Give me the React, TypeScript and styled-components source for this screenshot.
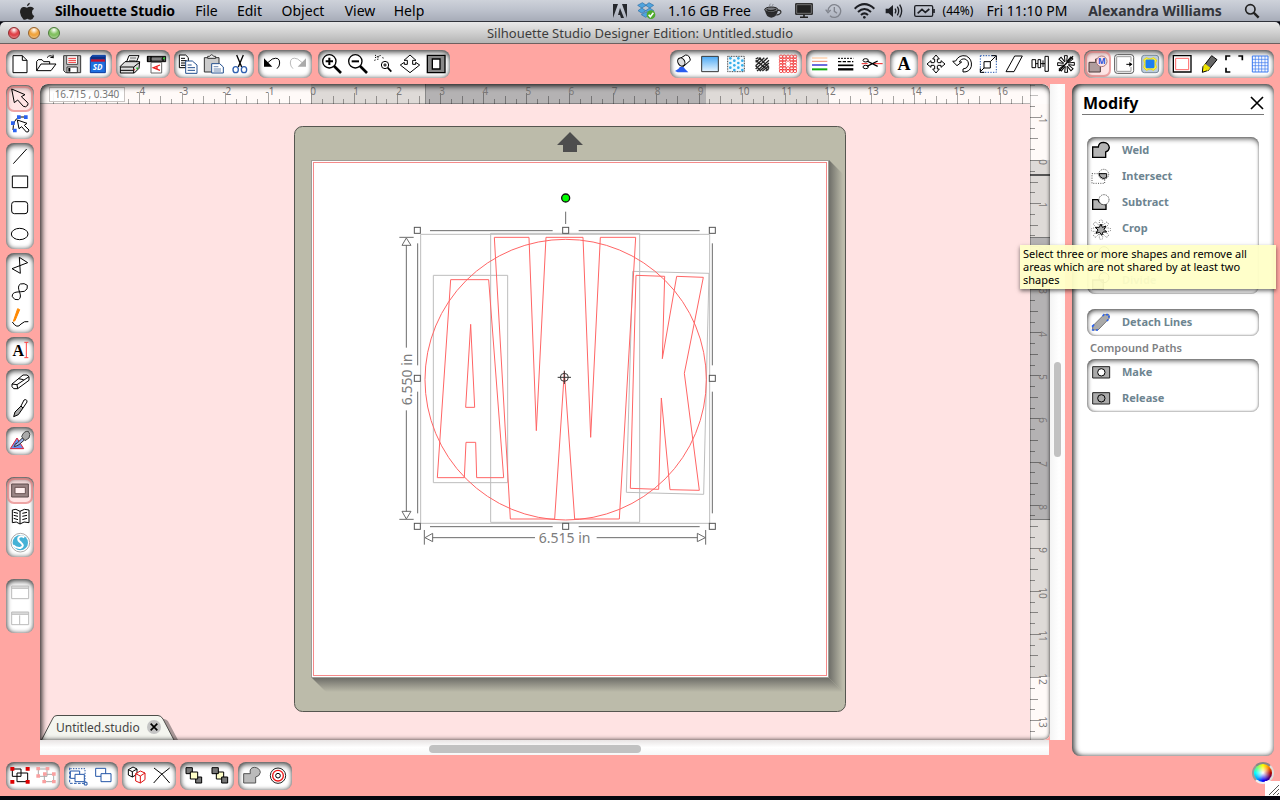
import React from "react";
import styled, { createGlobalStyle, css } from "styled-components";

const GlobalStyle = createGlobalStyle`
  *, *::before, *::after { box-sizing: border-box; }
  body {
    margin: 0;
    background: #05060f;
    font-family: "Noto Sans", "Open Sans", sans-serif;
    color: #000;
  }
  button {
    font: inherit;
    color: inherit;
    border: 0;
    padding: 0;
    margin: 0;
    background: none;
    cursor: pointer;
  }
`;

const serif = '"Liberation Serif", serif';
const pink = "#ffa6a2";

/* ---------- layout ---------- */

const Screen = styled.div`
  display: flex;
  flex-direction: column;
  min-height: 100vh;
  padding-bottom: 4px;
  background: #05060f;
`;

const MenuBar = styled.nav`
  display: flex;
  align-items: center;
  height: 22px;
  padding: 0 8px;
  background: linear-gradient(#ced2da, #bcc1cc 50%, #a7acb8);
  border-bottom: 1px solid #30323a;
`;

const MenuItem = styled.button<{ $w: number; $bold?: boolean; $small?: boolean; $dim?: boolean }>`
  display: flex;
  align-items: center;
  justify-content: center;
  flex: none;
  width: ${(p) => p.$w}px;
  height: 21px;
  white-space: nowrap;
  font-size: ${(p) => (p.$small ? 12 : 14)}px;
  font-weight: ${(p) => (p.$bold ? 700 : 400)};
  color: ${(p) => (p.$dim ? "#34363c" : "#000")};
`;

const Spacer = styled.div`
  flex: 1;
`;

const TitleBar = styled.header`
  display: flex;
  align-items: center;
  height: 22px;
  padding: 0 8px;
  border-radius: 5px 5px 0 0;
  border-bottom: 1px solid #6d6060;
  background: linear-gradient(#e9e9e9, #d0d0d0 50%, #b4b4b4);
`;

const WindowButtons = styled.div`
  display: flex;
  gap: 8px;
  width: 60px;
`;

const WindowButton = styled.button<{ $color: string; $edge: string }>`
  width: 12px;
  height: 12px;
  border: 1px solid ${(p) => p.$edge};
  border-radius: 50%;
  background: radial-gradient(circle at 50% 20%, #fff 0, ${(p) => p.$color} 45%, ${(p) => p.$color} 60%, #fff8 120%);
`;

const WindowTitle = styled.h1`
  flex: 1;
  margin: 0 60px 0 0;
  text-align: center;
  font-size: 13px;
  line-height: 20px;
  font-weight: 400;
  color: #3c3c3c;
`;

const Body = styled.div`
  position: relative;
  flex: 1;
  display: flex;
  flex-direction: column;
  background: ${pink};
`;

const Toolbar = styled.div`
  display: flex;
  gap: 4px;
  padding: 6px;
`;

const Main = styled.div`
  flex: 1;
  display: flex;
  min-height: 0;
  padding: 0 6px;
`;

const SideTools = styled.div`
  display: flex;
  flex-direction: column;
  gap: 4px;
  width: 28px;
  margin-right: 6px;
  padding-top: 1px;
`;

const inset = css`
  box-shadow:
    inset 0 4px 5px -1px rgba(0, 0, 0, 0.55),
    inset 3px 0 4px -1px rgba(0, 0, 0, 0.3),
    inset -2px 0 4px -1px rgba(0, 0, 0, 0.25),
    inset 0 -2px 4px -1px rgba(0, 0, 0, 0.25);
`;

const ToolGroup = styled.div<{ $column?: boolean; $gapBefore?: number }>`
  display: flex;
  flex: none;
  flex-direction: ${(p) => (p.$column ? "column" : "row")};
  ${(p) => p.$gapBefore && `margin-${p.$column ? "top" : "left"}: ${p.$gapBefore}px;`}
  padding: 1px;
  border-radius: 8px;
  background: #fff;
  ${inset}
`;

const ToolButton = styled.button<{ $active?: boolean }>`
  display: block;
  width: 26px;
  height: 26px;
  border-radius: 7px;
  ${(p) =>
    p.$active &&
    `background: rgba(255, 170, 170, 0.3); box-shadow: inset 0 0 0 2px rgba(225, 120, 120, 0.6);`}
`;

const Glyph = styled.svg`
  display: block;
  width: 100%;
  height: 100%;
  fill: none;
  stroke: #000;
  stroke-width: 3;
`;

const Workspace = styled.section`
  flex: 1;
  display: grid;
  grid-template: minmax(0, 1fr) 15px / minmax(0, 1fr) 15px;
  margin-right: 7px;
  margin-bottom: 1px;
`;

const Canvas = styled.div`
  position: relative;
  display: grid;
  grid-template: 20px minmax(0, 1fr) / minmax(0, 1fr) 20px;
  border-radius: 8px 8px 7px 0;
  overflow: hidden;
  background: #ffe3e3;
  &::after {
    content: "";
    position: absolute;
    inset: 0;
    border-radius: inherit;
    pointer-events: none;
    box-shadow:
      inset 0 4px 5px -1px rgba(0, 0, 0, 0.6),
      inset 4px 0 5px -1px rgba(0, 0, 0, 0.55),
      inset 0 -2px 4px -1px rgba(0, 0, 0, 0.3),
      inset -1px 0 3px -1px rgba(0, 0, 0, 0.3);
  }
`;

const Fill = styled.svg<{ $rows?: boolean }>`
  display: block;
  width: 100%;
  height: 100%;
  min-height: 0;
  ${(p) => p.$rows && "grid-row: 1 / 3; grid-column: 2;"}
`;

const Position = styled.output`
  position: absolute;
  left: 9px;
  top: 3px;
  width: 76px;
  height: 15px;
  border: 1px solid #c9c4c2;
  background: rgba(255, 255, 255, 0.9);
  text-align: center;
  font-size: 10px;
  line-height: 13px;
  color: #777;
`;

const Tab = styled.div`
  position: absolute;
  left: 1px;
  bottom: 0;
  display: flex;
  align-items: center;
  width: 138px;
  height: 25px;
  padding-left: 15px;
`;

const TabShape = styled.svg`
  position: absolute;
  inset: 0;
  width: 138px;
  height: 25px;
`;

const TabLabel = styled.button`
  position: relative;
  width: 86px;
  padding-top: 1px;
  text-align: left;
  font-size: 12px;
  line-height: 24px;
  color: #444;
`;

const TabClose = styled.button`
  position: relative;
  display: block;
  width: 14px;
  height: 14px;
  margin: 0 0 2px 5px;
  border-radius: 50%;
  background: #c4c4c4;
`;

const ScrollTrack = styled.div<{ $vertical?: boolean }>`
  display: flex;
  ${(p) =>
    p.$vertical
      ? "padding: 278px 4px 0 4px; background: linear-gradient(90deg, #f4f4f4, #fff 60%, #fafafa);"
      : "padding: 5px 0 2px 389px; background: linear-gradient(#e8e4e4, #fff 50%, #f6f6f6); margin-right: 1px;"}
`;

const ScrollThumb = styled.div<{ $vertical?: boolean }>`
  ${(p) => (p.$vertical ? "width: 8px; height: 95px;" : "width: 212px; height: 8px;")}
  border-radius: 4px;
  background: #c1c1c1;
`;

const Panel = styled.aside`
  position: relative;
  flex: none;
  width: 202px;
  padding: 0 10px;
  border-radius: 8px;
  background: #fff;
  box-shadow:
    inset 0 4px 5px -1px rgba(0, 0, 0, 0.55),
    inset 4px 0 5px -1px rgba(0, 0, 0, 0.55),
    inset 0 -2px 4px -1px rgba(0, 0, 0, 0.25),
    inset -2px 0 4px -1px rgba(0, 0, 0, 0.2);
`;

const PanelHeader = styled.div`
  display: flex;
  align-items: center;
  justify-content: space-between;
  height: 31px;
  padding-top: 8px;
  border-bottom: 1px solid #777;
  margin-bottom: 22px;
`;

const PanelTitle = styled.h2`
  margin: 0;
  padding-left: 1px;
  font-size: 16px;
  line-height: 22px;
`;

const CloseButton = styled.button`
  width: 14px;
  height: 14px;
`;

const ActionList = styled.div`
  margin: 0 5px;
  padding-top: 1px;
  border-radius: 8px;
  background: #fff;
  box-shadow:
    inset 0 4px 5px -2px rgba(0, 0, 0, 0.6),
    inset 3px 0 4px -2px rgba(0, 0, 0, 0.4),
    inset -1px 0 2px 0 rgba(0, 0, 0, 0.15),
    inset 0 -1px 2px 0 rgba(0, 0, 0, 0.2);
  & + & { margin-top: 15px; }
`;

const Action = styled.button`
  display: flex;
  align-items: center;
  gap: 8px;
  width: 100%;
  height: 26px;
  padding-left: 1px;
  font-size: 11px;
  line-height: 24px;
  font-weight: 700;
  color: #6d8490;
  text-align: left;
`;

const ActionLabel = styled.span`
  align-self: flex-start;
`;

const ActionGlyph = styled(Glyph)`
  width: 26px;
  height: 26px;
  flex: none;
`;

const SubHeading = styled.h3`
  margin: 0 8px;
  font-size: 11px;
  line-height: 23px;
  font-weight: 600;
  color: #7e8083;
`;

const Tooltip = styled.div`
  position: absolute;
  left: -52px;
  top: 161px;
  width: 256px;
  padding: 2px 3px 3px;
  background: rgba(255, 255, 199, 0.95);
  box-shadow: 0 2px 4px rgba(0, 0, 0, 0.55);
  font-size: 11px;
  line-height: 13px;
  color: #000;
`;

const BottomBar = styled.footer`
  display: flex;
  gap: 4px;
  padding: 6px 6px 6px;
  height: 40px;
  align-items: flex-start;
`;

const ColorWheel = styled.button`
  width: 22px;
  height: 22px;
  border: 2px solid #bbb;
  border-color: #888 #ddd #eee #999;
  border-radius: 50%;
  background:
    radial-gradient(circle, #fff 0, rgba(255, 255, 255, 0) 60%),
    conic-gradient(#ff0, #f80, #a00 25%, #408, #00f 50%, #0af, #0ff 75%, #7f7, #ff0);
`;

const Grip = styled.svg`
  position: absolute;
  right: 0;
  bottom: 0;
  width: 15px;
  height: 15px;
  background: #fff;
`;

/* ---------- icons, drawn on a 78 × 78 grid ---------- */

const G = ({ children, view = "0 0 78 78" }: { children: React.ReactNode; view?: string }) => (
  <Glyph viewBox={view} aria-hidden="true">{children}</Glyph>
);

const magnifier = (
  <>
    <circle cx="31" cy="31" r="20" strokeWidth="4" fill="#fff" />
    <path d="M45 45L66 66" strokeWidth="8" />
  </>
);
const pointer = "M14 9L22 50L32 42L49 61Q56 65 62 58Q65 52 60 48L43 32L54 26Z";
const rings = (x: number, y: number) => <circle key={`${x}-${y}`} cx={x} cy={y} r="5" />;
const around = (n: number, draw: React.ReactNode) =>
  Array.from({ length: n }, (_, i) => (
    <g key={i} transform={`rotate(${(360 / n) * i} 39 39)`}>{draw}</g>
  ));

const icons: Record<string, React.ReactNode> = {
  New: <path d="M18 14H46L60 28V65H18ZM46 14V28H60" fill="#fff" />,
  Open: (
    <>
      <path d="M11 59V31L16 26H27L32 32H50V39M11 59L24 39H69L54 59Z" fill="#fff" />
      <path d="M42 20Q52 8 61 20M61 20L60 11M61 20L52 19" />
    </>
  ),
  Save: (
    <>
      <path d="M14 14H65V65H20L14 59Z" fill="#bbb" stroke="#333" />
      <path d="M23 14H56V40H23Z" fill="#fff" stroke="#444" />
      <path d="M28 22H51M28 28H51M28 34H51" stroke="#e33" />
      <path d="M24 48H55V65H24Z" fill="#fff" stroke="#333" />
      <path d="M31 51V62" strokeWidth="6" />
    </>
  ),
  "Save to SD card": (
    <>
      <path d="M16 20L22 13H61V65H16Z" fill="#1e6fe0" stroke="#0a3a9c" />
      <path d="M18 16H60V26H18Z" fill="#0c2f86" stroke="none" />
      <path d="M18 25H60V32H18Z" fill="#c8102e" stroke="none" />
      <text x="38" y="56" fontSize="24" fontWeight="700" textAnchor="middle" fill="#fff" stroke="none" fontStyle="italic">SD</text>
    </>
  ),
  Print: (
    <>
      <path d="M28 34L36 14H66L56 38" fill="#fff" />
      <path d="M39 21H58M36 28H56" strokeWidth="2" />
      <path d="M10 46L24 32H68L66 52L52 66H10Z" fill="#ddd" />
      <path d="M10 48H50L68 34M50 48V66M10 58H50" strokeWidth="3" />
      <path d="M58 52h5" stroke="#2b2" strokeWidth="5" />
      <path d="M50 56h4" stroke="#d33" strokeWidth="4" />
    </>
  ),
  "Send to Silhouette": (
    <>
      <path d="M13 16H68V32H13Z" fill="#555" />
      <path d="M14 16V32M24 16V32M60 18V30" strokeWidth="4" />
      <path d="M26 24H54" stroke="#999" strokeWidth="4" />
      <path d="M60 22h6" stroke="#3c3" strokeWidth="5" />
      <path d="M24 34H56V66H24Z" fill="#fff" stroke="#666" />
      <path d="M51 42L31 50L51 58M42 46V54" stroke="#e22" strokeWidth="4" />
    </>
  ),
  Copy: (
    <>
      <path d="M13 12H32L40 20V50H13Z" fill="#fff" />
      <path d="M18 22H30M18 29H35M18 36H35M18 43H35" />
      <path d="M32 30H52L66 42V67H32Z" fill="#fff" stroke="#24508f" />
      <path d="M38 42H50M38 50H60M38 58H60" stroke="#24508f" />
    </>
  ),
  Paste: (
    <>
      <path d="M10 20H54V63H10Z" fill="#ccc" stroke="#333" />
      <path d="M20 22V16H26Q32 6 38 16H44V22Z" fill="#eee" stroke="#333" />
      <path d="M32 38H56L67 48V66H32Z" fill="#fff" stroke="#24508f" />
      <path d="M38 47H52M38 54H60M38 60H60" stroke="#24508f" strokeWidth="2" />
    </>
  ),
  Cut: (
    <>
      <path d="M29 12L44 48M49 12L34 48" strokeWidth="4" />
      <ellipse cx="26" cy="56" rx="8" ry="9" stroke="#3060b0" strokeWidth="4" />
      <ellipse cx="51" cy="56" rx="8" ry="9" stroke="#3060b0" strokeWidth="4" />
    </>
  ),
  Undo: (
    <>
      <path d="M20 40L40 24Q62 16 62 36Q62 46 54 53" />
      <path d="M15 22V47H40Z" fill="#000" stroke="none" />
    </>
  ),
  Redo: (
    <>
      <path d="M58 40L38 24Q16 16 16 36Q16 46 24 53" stroke="#bbb" />
      <path d="M63 22V47H38Z" fill="#aaa" stroke="none" />
    </>
  ),
  "Zoom In": <>{magnifier}<path d="M20 31H42M31 20V42" strokeWidth="6" /></>,
  "Zoom Out": <>{magnifier}<path d="M20 31H42" strokeWidth="6" /></>,
  "Zoom Selection": (
    <>
      <path d="M12 20L22 16M22 16L20 28M12 12L16 15M28 12L26 16M10 28L16 26M34 20L40 22" strokeDasharray="4 3" />
      <circle cx="42" cy="42" r="11" />
      <path d="M37 42H47M42 37V47" />
      <path d="M50 50L61 62" strokeWidth="5" />
    </>
  ),
  "Drag Zoom": <path d="M39 12L57 28H47V40H56V34L68 42L39 65L10 42L22 34V40H31V28H21Z" fill="#fff" strokeLinejoin="round" />,
  "Fit to Page": (
    <>
      <path d="M13 13H66V65H13Z" fill="#888" strokeWidth="4" />
      <path d="M28 24H51V54H28Z" fill="#fff" strokeWidth="4" />
    </>
  ),
  "Fill Color": (
    <>
      <path d="M12 60Q26 52 26 48Q40 46 42 54L52 64H20Z" fill="#2a5df0" stroke="none" />
      <path d="M21 26L44 12Q56 12 58 28L38 46Q22 44 21 26Z" fill="#fff" />
      <ellipse cx="31" cy="33" rx="10" ry="13" fill="#ddd" transform="rotate(-30 31 33)" />
    </>
  ),
  "Fill Gradient": (
    <>
      <defs>
        <linearGradient id="sky" x1="0" y1="0" x2="0" y2="1">
          <stop offset="0" stopColor="#4aa8f4" /><stop offset="1" stopColor="#e8f5ff" />
        </linearGradient>
      </defs>
      <path d="M14 16H64V62H14Z" fill="url(#sky)" stroke="#333" />
    </>
  ),
  "Fill Pattern": (
    <>
      <path d="M14 16H64V62H14Z" fill="#eef9ff" stroke="#444" strokeDasharray="3 2" />
      <g fill="#35aeea" stroke="none">
        {[22, 34, 46, 58].flatMap((x, i) =>
          [22, 36, 50].map((y) => <circle key={`${x}-${y}`} cx={x} cy={y + (i % 2) * 7} r="4" />)
        )}
      </g>
    </>
  ),
  Sketch: (
    <path
      d="M20 24L28 20M20 34L36 20M20 44L46 20M20 54L56 20M24 60L60 28M32 60L60 36M40 60L60 44M50 60L60 52M20 28L58 58M30 20L60 50M20 44L36 60"
      stroke="#222"
      strokeWidth="4"
    />
  ),
  Rhinestones: (
    <g stroke="#e11" strokeWidth="2">
      {[18, 28, 39, 50, 60].flatMap((x) => [17, 26, 52, 60].map((y) => rings(x, y)))}
      {[34, 43].flatMap((y) => [18, 28, 50, 60].map((x) => rings(x, y)))}
    </g>
  ),
  "Line Color": (
    <>
      <path d="M15 21H61" stroke="#ffbe8a" />
      <path d="M15 31H61" stroke="#e86" />
      <path d="M15 42H61" stroke="#22c" strokeWidth="4" />
      <path d="M15 55H61" stroke="#1a1" strokeWidth="6" />
    </>
  ),
  "Line Style": (
    <>
      <path d="M15 22H61" strokeDasharray="6 3" />
      <path d="M15 32H61" strokeWidth="4" strokeDasharray="10 4" />
      <path d="M15 43H61" strokeWidth="5" />
      <path d="M15 55H61" strokeWidth="7" />
    </>
  ),
  "Cut Style": (
    <>
      <path d="M8 38H26M44 38H71" stroke="#e22" />
      <path d="M24 30L56 46M24 46L56 30" strokeWidth="4" />
      <ellipse cx="20" cy="28" rx="8" ry="5" />
      <ellipse cx="20" cy="48" rx="8" ry="5" />
    </>
  ),
  "Text Style": (
    <text x="39" y="57" fontSize="54" fontWeight="700" textAnchor="middle" fill="#000" stroke="none" fontFamily={serif}>A</text>
  ),
  Move: <>{around(4, <path d="M35 34V24H29L39 12L49 24H43V34" fill="#fff" />)}</>,
  Rotate: <path d="M11 31L24 44L38 33H31Q36 22 48 24Q60 29 58 42Q54 54 42 54L42 63Q62 64 67 46Q70 24 52 15Q30 10 20 30Z" fill="#fff" strokeLinejoin="round" />,
  Scale: (
    <>
      <path d="M16 14H64V64H16Z" stroke="#2456b0" strokeDasharray="4 4" />
      <path d="M27 32H46V51H27Z" fill="#fff" />
      <path d="M46 32L62 16M50 14H64V28M27 51L16 62M16 52V64H28" />
    </>
  ),
  Shear: <path d="M41 15H64L39 62H15Z" fill="#fff" />,
  Align: (
    <>
      <path d="M24 38H54" />
      <path d="M15 26H26V50H15ZM33 26H41V50H33ZM54 16H64V61H54Z" fill="#fff" />
      <path d="M48 28V48" />
    </>
  ),
  Replicate: <>{around(8, <path d="M36 32L34 14H43L41 32" fill="#fff" />)}<path d="M18 60L60 16" strokeWidth="4" /></>,
  Modify: (
    <>
      <path d="M12 34H32V24H46V63H12Z" fill="#b09d9d" stroke="#4b3b3b" />
      <circle cx="50" cy="31" r="16" fill="#fbe4e8" stroke="#a77" />
      <text x="50" y="40" fontSize="24" textAnchor="middle" fill="#2a50d8" stroke="none" fontWeight="700">M</text>
    </>
  ),
  Offset: (
    <>
      <rect x="11" y="11" width="57" height="56" rx="8" fill="#fff" stroke="#555" />
      <path d="M60 32V17H17V61H60V48" stroke="#999" />
      <path d="M46 40H62" />
      <path d="M55 33L64 40L55 47Z" fill="#000" stroke="none" />
    </>
  ),
  Trace: (
    <>
      <rect x="14" y="13" width="51" height="52" rx="8" fill="#bcd" stroke="#789" />
      <path d="M20 26L28 20L39 24L50 20L59 27L55 38L59 50L50 58L39 54L28 58L20 50L23 38Z" fill="#fff23a" stroke="#e6d820" />
      <path d="M28 28L50 28L50 49L28 49Z" fill="#1c7ff0" stroke="#1c7ff0" strokeWidth="5" strokeLinejoin="bevel" />
    </>
  ),
  "Page Settings": (
    <>
      <path d="M13 14H66V63H13Z" fill="#fff" strokeWidth="4" />
      <path d="M20 22H59V56H20Z" stroke="#f66" strokeWidth="3" />
    </>
  ),
  Pencil: (
    <>
      <path d="M24 48L50 14L66 26L40 58Z" fill="#666" />
      <path d="M24 46L40 58L22 64Z" fill="#fff200" />
      <path d="M30 38L46 50L38 60L24 48Z" fill="#ece300" stroke="none" />
    </>
  ),
  "Full Screen": <path d="M15 28V15H28M52 15H64V28M15 50V63H28" strokeWidth="5" />,
  Grid: (
    <>
      <path d="M16 15H63V63H16Z" fill="#f4f8ff" stroke="#3a78ee" />
      <path d="M25 15V63M35 15V63M44 15V63M54 15V63M15 25H63M15 35H63M15 44H63M15 54H63" stroke="#3a78ee" strokeWidth="2" />
    </>
  ),
  Select: <path d={pointer} strokeLinejoin="round" />,
  "Edit Points": (
    <>
      <path d="M56 15H36Q18 24 18 54" />
      <path d="M30 10h11v11h-11zM51 10h11v11h-11zM12 28h11v11h-11zM18 50h11v11h-11z" fill="#2a62f0" stroke="none" />
      <path d="M31 24L36 50L44 44L58 60Q65 62 66 54L52 40L60 34Z" fill="#fff" />
    </>
  ),
  "Draw a Line": <path d="M19 59L59 15" />,
  "Draw a Rectangle": <path d="M16 18H62V53H16Z" fill="#fff" />,
  "Draw a Rounded Rectangle": <rect x="14" y="17" width="48" height="36" rx="8" fill="#fff" />,
  "Draw an Ellipse": <ellipse cx="38" cy="36" rx="25" ry="17" fill="#fff" />,
  "Draw a Polygon": <path d="M37 10L62 26L15 44L40 58Z" strokeLinejoin="round" />,
  "Draw a Curve Shape": <path d="M38 37Q30 18 40 12Q52 8 61 16Q64 28 52 34Q38 36 30 36Q14 38 16 50Q22 62 34 59Q44 54 38 37Z" />,
  "Draw Freehand": (
    <>
      <path d="M32 8L38 11L24 44L19 46Z" fill="#f80" stroke="#f80" />
      <path d="M16 48Q30 70 42 54Q52 44 64 47" />
    </>
  ),
  Text: (
    <>
      <text x="34" y="55" fontSize="48" fontWeight="700" textAnchor="middle" fill="#000" stroke="none" fontFamily={serif}>A</text>
      <path d="M52 13H64M58 13V59M52 59H64" stroke="#f44" />
    </>
  ),
  Eraser: (
    <>
      <path d="M15 42L48 15H60L66 20V31L32 56H20L15 50Z" fill="#fff" strokeLinejoin="round" />
      <path d="M15 42L30 44L32 56M30 44L66 20M34 26L50 29" />
    </>
  ),
  Knife: (
    <>
      <path d="M42 30L51 12Q60 8 60 18L48 36Z" fill="#fff" />
      <path d="M42 30L48 36L34 56L20 62L24 48Z" fill="#aaa" />
    </>
  ),
  Eyedropper: (
    <>
      <path d="M10 62L30 30L50 62Z" fill="#6b90f0" stroke="#d23" />
      <path d="M22 56Q24 44 30 46L46 30L52 36L36 50Q30 54 22 56Z" fill="#9db4f0" stroke="#333" />
      <path d="M44 26Q50 8 64 10Q72 18 66 30L54 38Z" fill="#aaa" stroke="#444" />
    </>
  ),
  "Drawing View": (
    <>
      <path d="M14 18H64V57H14Z" fill="#9a8484" stroke="#5a4848" />
      <path d="M24 28H55V47H24Z" fill="#ffeeee" stroke="#6a5252" />
    </>
  ),
  "Library View": (
    <>
      <path d="M39 22Q26 12 16 18V56Q28 50 39 60Q50 50 66 56V18Q52 12 39 22V60" fill="#fff" />
      <path d="M20 25L33 28M20 34L33 37M20 43L33 47M46 28L60 25M46 37L60 34M46 47L60 43" />
    </>
  ),
  "Online Store": (
    <>
      <circle cx="40" cy="38" r="28" fill="#fff" stroke="#aaa" />
      <circle cx="40" cy="38" r="23" fill="#45b2d6" stroke="none" />
      <path d="M52 22Q40 14 34 24Q32 32 42 38Q54 48 40 54Q30 56 18 46" stroke="#fff" strokeWidth="6" />
    </>
  ),
  "Single Window": (
    <>
      <path d="M14 18H65V56H14Z" fill="#fff" stroke="#bbb" />
      <path d="M14 21H65M14 25H65" stroke="#bbb" />
    </>
  ),
  "Split Window": (
    <>
      <path d="M14 18H65V56H14ZM38 28V56" fill="#fff" stroke="#bbb" />
      <path d="M14 21H65M14 25H65" stroke="#bbb" />
    </>
  ),
  Group: (
    <>
      <path d="M16 18H42V40H16ZM30 30H62V56H30Z" />
      <path d="M10 12h12v11H10zM56 12h12v11H56zM10 51h12v11H10zM56 51h12v11H56z" fill="#d00" stroke="none" />
    </>
  ),
  Ungroup: (
    <>
      <path d="M16 18H42V40H16ZM34 34H62V56H34Z" stroke="#aaa" />
      <path d="M10 12h11v10H10zM38 12h11v10H38zM10 34h11v10H10zM30 28h11v10H30zM57 28h11v10H57zM28 51h11v10H28zM57 51h11v10H57z" fill="#f9a0a0" stroke="none" />
    </>
  ),
  "Make Group": (
    <g stroke="#2456a8">
      <path d="M16 17H60V58" strokeDasharray="4 4" />
      <path d="M14 14V61H60" strokeDasharray="8 4" />
      <path d="M16 24H44V46H16Z" fill="#fff" />
      <path d="M30 34H58V56H30Z" fill="#fff" />
      <path d="M58 58h8v8h-8z" fill="#fff" />
    </g>
  ),
  "Release Group": (
    <g stroke="#2456a8">
      <path d="M14 16H44V40H14Z" fill="#fff" />
      <path d="M30 32H60V56H30Z" fill="#fff" />
    </g>
  ),
  "3D Object": (
    <>
      <path d="M16 20L30 12L42 18V34L28 42L16 36ZM16 20L28 26L42 18M28 26V42" fill="#fff" />
      <path d="M38 32L52 24L66 30V50L52 60L38 54ZM38 32L52 39L66 30M52 39V60" fill="#fff" stroke="#d11" />
    </>
  ),
  Delete: <path d="M15 15Q40 30 62 60M62 15Q32 35 14 60" />,
  "Bring Forward": (
    <>
      <path d="M15 14H34V32H15ZM44 42H62V60H44Z" fill="#777" />
      <path d="M28 27H50V48H28Z" fill="#ffffc8" />
    </>
  ),
  "Send Backward": (
    <>
      <path d="M28 27H50V48H28Z" fill="#ffffc8" />
      <path d="M15 14H34V32H15ZM44 42H62V60H44Z" fill="#777" />
    </>
  ),
  "Weld Shapes": <path d="M14 32H34Q30 14 46 13Q62 14 64 28Q62 40 50 42V60H14Z" fill="#bbb" stroke="#555" />,
  "Offset Path": (
    <>
      <circle cx="39" cy="38" r="23" stroke="#222" />
      <circle cx="39" cy="38" r="16" stroke="#e11" strokeWidth="4" />
      <circle cx="39" cy="38" r="7" />
    </>
  ),
  Weld: <path d="M14 25H31Q32 11 47 11Q62 12 64 27Q62 38 53 40V56H14Z" fill="#b4b4b4" strokeWidth="4" />,
  Intersect: (
    <>
      <path d="M12 27H50V56H12Z" strokeDasharray="3 4" stroke="#555" />
      <circle cx="47" cy="29" r="15" strokeDasharray="3 3" stroke="#555" />
      <path d="M33 27H56V38Q50 42 44 41Q34 38 33 27Z" fill="#aaa" />
    </>
  ),
  Subtract: (
    <>
      <path d="M14 27H30Q34 42 54 42V56H14Z" fill="#b4b4b4" strokeWidth="4" />
      <circle cx="48" cy="27" r="15" stroke="#555" strokeDasharray="3 2" fill="#fff" />
    </>
  ),
  Crop: (
    <>
      {around(8, <path d="M34 26V12Q39 8 44 12V26" strokeDasharray="3 4" strokeWidth="2" stroke="#333" />)}
      <path d="M39 22L43 32L54 28L48 38L56 46L45 46L41 56L35 47L24 50L30 40L22 32L34 32Z" fill="#aaa" />
    </>
  ),
  "Subtract All": (
    <>
      <path d="M14 27H50V58H14Z" fill="#b4b4b4" />
      <circle cx="48" cy="27" r="15" />
    </>
  ),
  Divide: (
    <>
      <path d="M14 34H46V60H14Z" fill="#b4b4b4" strokeWidth="4" />
      <circle cx="48" cy="27" r="15" />
    </>
  ),
  "Detach Lines": (
    <>
      <path d="M14 46L48 12H63V24L30 58H14Z" fill="#aaa" stroke="#777" />
      <path d="M14 44V58H30L34 54M14 46L22 38M44 16L48 12H63V24L56 32" stroke="#2a62f0" strokeWidth="5" strokeDasharray="6 6" />
    </>
  ),
  Make: (
    <>
      <path d="M14 18H65V52H14Z" fill="#aaa" stroke="#222" />
      <circle cx="40" cy="35" r="11" fill="#fff" />
    </>
  ),
  Release: (
    <>
      <path d="M14 18H65V52H14Z" fill="#aaa" stroke="#222" />
      <circle cx="40" cy="35" r="11" />
    </>
  ),
};

const Tools = ({ names, active, ...group }: { names: string[]; active?: string; $column?: boolean; $gapBefore?: number }) => (
  <ToolGroup role="group" {...group}>
    {names.map((name) => (
      <ToolButton key={name} aria-label={name} $active={name === active}>
        <G>{icons[name]}</G>
      </ToolButton>
    ))}
  </ToolGroup>
);

/* ---------- rulers ---------- */

const INCH = 43.08;
const ticks = (from: number, to: number) =>
  Array.from({ length: (to - from) * 4 + 1 }, (_, i) => from + i / 4);
const tickSize = (v: number) => (v % 1 === 0 ? 11 : v % 0.5 === 0 ? 8 : 5);

const TopRuler = () => (
  <Fill aria-label="Horizontal ruler">
    <rect width="100%" height="20" fill="#fffaf8" />
    <g transform="translate(271 0)">
      <rect width="517" height="20" fill="#dedad7" />
      <rect x="114" width="281" height="20" fill="#b4b2b3" />
      <path d="M114.5 0V20" stroke="#888" />
      {ticks(-6, 18).map((v) => (
        <path key={v} d={`M${Math.round(v * INCH) + 0.5} ${20 - tickSize(v)}V20`} stroke="#000" strokeOpacity="0.34" />
      ))}
      {ticks(-4, 16).filter((v) => v % 1 === 0).map((v) => (
        <text key={v} x={v * INCH + 2} y="11" fontSize="10" textAnchor="middle" fill="#7c7979">{v}</text>
      ))}
    </g>
    <path d="M0 19.5H2000" stroke="#000" strokeOpacity="0.28" />
  </Fill>
);

const SideRuler = () => (
  <Fill $rows aria-label="Vertical ruler">
    <rect width="20" height="100%" fill="#fffaf8" />
    <g transform="translate(0 76)">
      <rect width="20" height="517" fill="#dedad7" />
      <rect y="77" width="20" height="283" fill="#b4b2b3" />
      <path d="M0 77.5H20M0 359.5H20" stroke="#777" />
      <path d="M0 15H20" stroke="#555" strokeWidth="2" />
      {ticks(-2, 14).map((v) => (
        <path key={v} d={`M0 ${Math.round(v * INCH) + 0.5}H${tickSize(v)}`} stroke="#000" strokeOpacity="0.4" />
      ))}
      {ticks(-1, 13).filter((v) => v % 1 === 0).map((v) => (
        <text key={v} transform={`translate(9 ${Math.round(v * INCH) + 2}) rotate(90)`} fontSize="10" textAnchor="middle" fill="#7c7979">{v}</text>
      ))}
    </g>
    <rect width="20" height="20" fill="#fff" fillOpacity="0.4" />
    <path d="M0 0.5V2000" stroke="#000" strokeOpacity="0.5" />
  </Fill>
);

/* ---------- cutting mat and artwork ---------- */

const handles = [[82, 151], [527, 151], [967, 151], [82, 595], [967, 595], [82, 1039], [527, 1039], [967, 1039]];

const Artwork = () => (
  <Fill aria-label="Cutting mat">
    <defs>
      <linearGradient id="castRight" x1="0" x2="1" y1="0" y2="0">
        <stop offset="0" stopColor="#6e6e68" /><stop offset="1" stopColor="#bcbbaa" />
      </linearGradient>
      <linearGradient id="castDown" x1="0" x2="0" y1="0" y2="1">
        <stop offset="0" stopColor="#6e6e68" /><stop offset="1" stopColor="#bcbbaa" />
      </linearGradient>
    </defs>
    <g transform="translate(-40 -104)">
      <rect x="294.5" y="126.5" width="551" height="585" rx="8" fill="#bcbbaa" stroke="#565650" />
      <path d="M570 132L583 145H577V152H563V145H557Z" fill="#4d4d4d" />
      <path d="M829 160L843 174V692L829 678Z" fill="url(#castRight)" />
      <path d="M312 678L326 692H843L829 678Z" fill="url(#castDown)" />
      <rect x="311.5" y="160.5" width="517" height="517" fill="#fff" stroke="#9c9c96" />
      <rect x="313.5" y="162.5" width="513" height="513" fill="none" stroke="#f58a8a" />
    </g>
    <g transform="translate(350 76) scale(0.33333)" fill="none" strokeWidth="3">
      <g stroke="#bdbdbd">
        <path d="M92 163H959V1030H92Z" />
        <path d="M130 286H353V908H130Z" />
        <path d="M302 160H749V1027H302Z" />
        <path d="M728 274L957 280L941 943L709 937Z" />
      </g>
      <g stroke="#ff6464">
        <ellipse cx="527" cy="599" rx="422" ry="421" />
        <path d="M182 299H296L341 893H260L257 787H228L223 893H142ZM242 433L254 682H227Z" />
        <path d="M313 172H417L439 752L468 172H579L602 772L631 172H737L688 1017H554L523 575L494 1017H361Z" />
        <path d="M738 286L824 289L817 536L860 289L940 292L883 580L928 931L840 929L814 654L806 928L721 925Z" />
      </g>
      <g stroke="#6a6a6a">
        <path d="M120 152H488M566 152H929M120 1040H488M566 1040H929M83 190V556M83 635V1000M967 190V556M967 635V1000M527 95V132" />
        {handles.map(([x, y]) => (
          <rect key={`${x}-${y}`} x={x - 9} y={y - 9} width="18" height="18" fill="#fff" stroke="#555" />
        ))}
        <path d="M28 172H71M28 1018H71M49 195V503M49 691V995M49 174L36 196H63ZM49 1017L36 994H63Z" />
        <path d="M103 1050V1094M947 1050V1094M128 1073H435M620 1073H922M105 1073L128 1060V1085ZM946 1073L922 1060V1085Z" />
      </g>
      <circle cx="527" cy="54" r="12" fill="#0f0" stroke="#111" strokeWidth="4" />
      <g stroke="#333">
        <circle cx="523" cy="592" r="12" />
        <path d="M503 592H543M523 572V612" />
      </g>
      <g fill="#7c7c7c" fontSize="42" textAnchor="middle">
        <text x="524" y="1089">6.515 in</text>
        <text transform="translate(65 598) rotate(-90)">6.550 in</text>
      </g>
    </g>
  </Fill>
);

/* ---------- menu bar symbols ---------- */

const Sym = ({ w, h, children, view }: { w: number; h: number; children: React.ReactNode; view: string }) => (
  <svg width={w} height={h} viewBox={view} fill="none" aria-hidden="true">{children}</svg>
);

const AppleMark = () => (
  <Sym w={16} h={18} view="0 0 48 54">
    <path d="M33 2Q32 11 24 13Q23 5 33 2ZM24 17Q31 12 39 15Q43 17 45 20Q38 25 39 32Q40 39 46 42Q42 52 35 53Q30 53 25 50Q19 54 14 53Q4 44 3 31Q3 17 13 15Q18 14 24 17Z" fill="#222" />
  </Sym>
);
const AdobeMark = () => (
  <Sym w={14} h={14} view="0 0 14 14">
    <path d="M0 0H5L0 14ZM9 0H14V14ZM7 4L11 14H8L7 11H5Z" fill="#26282d" />
  </Sym>
);
const DropboxMark = () => (
  <Sym w={20} h={18} view="0 0 60 54">
    <path d="M16 2L28 10L14 18L2 10ZM36 2L50 10L38 18L26 10ZM14 18L26 26L15 34L3 26ZM38 18L50 26L38 34L26 26ZM26 30L38 38L26 46L13 38Z" fill="#4fa4de" stroke="#2d6ea6" strokeWidth="2" />
    <circle cx="42" cy="38" r="13" fill="#4faa2c" />
    <path d="M35 38L40 44L49 32" stroke="#fff" strokeWidth="5" />
  </Sym>
);
const CupMark = () => (
  <Sym w={18} h={16} view="0 0 54 48">
    <path d="M3 22Q6 44 22 44Q38 44 42 22Z" fill="#2c2c2e" />
    <ellipse cx="22" cy="20" rx="20" ry="8" fill="#77797e" stroke="#222" strokeWidth="3" />
    <path d="M41 22Q53 20 50 30Q46 36 37 36" stroke="#333" strokeWidth="4" />
    <path d="M8 20Q20 26 36 19" stroke="#222" strokeWidth="4" />
    <path d="M18 10Q14 6 20 2M27 11Q23 7 28 3" stroke="#8a8d95" strokeWidth="3" />
  </Sym>
);
const DisplayMark = () => (
  <Sym w={18} h={15} view="0 0 54 45">
    <path d="M2 2H52V34H2Z" fill="#222" stroke="#222" strokeWidth="3" />
    <path d="M5 5H49V31H5Z" stroke="#999" strokeWidth="2" />
    <path d="M27 34V42M15 43H39" stroke="#222" strokeWidth="5" />
  </Sym>
);
const ClockMark = () => (
  <Sym w={17} h={16} view="0 0 51 48">
    <path d="M9 24A19 19 0 1 1 15 38M2 20L9 29L17 21M28 12V25L36 31" stroke="#80848d" strokeWidth="4" />
  </Sym>
);
const WifiMark = () => (
  <Sym w={21} h={16} view="0 0 63 48">
    <path d="M2 17Q31 -10 61 17M12 27Q31 9 51 27M21 36Q31 26 42 36" stroke="#1d1f24" strokeWidth="6" />
    <circle cx="31" cy="43" r="4" fill="#1d1f24" />
  </Sym>
);
const VolumeMark = () => (
  <Sym w={18} h={16} view="0 0 54 48">
    <path d="M2 17H11L24 6V42L11 31H2Z" fill="#1d1f24" />
    <path d="M30 17Q35 24 30 31M37 11Q45 24 37 37M44 5Q56 24 44 43" stroke="#1d1f24" strokeWidth="4" />
  </Sym>
);
const BatteryMark = () => (
  <Sym w={21} h={12} view="0 0 63 36">
    <rect x="2" y="2" width="54" height="32" rx="4" stroke="#1d1f24" strokeWidth="4" />
    <path d="M60 12V24" stroke="#1d1f24" strokeWidth="5" />
    <path d="M11 25L24 13L34 22L46 12" stroke="#1d1f24" strokeWidth="5" />
  </Sym>
);
const SearchMark = () => (
  <Sym w={16} h={16} view="0 0 48 48">
    <circle cx="19" cy="19" r="14" stroke="#222" strokeWidth="5" />
    <path d="M29 29L44 44" stroke="#222" strokeWidth="7" />
  </Sym>
);

const ActionButton = ({ name }: { name: string }) => (
  <Action>
    <ActionGlyph viewBox="0 -2 78 78" aria-hidden="true">{icons[name]}</ActionGlyph>
    <ActionLabel>{name}</ActionLabel>
  </Action>
);

export default function App() {
  return (
    <Screen>
      <GlobalStyle />
      <MenuBar aria-label="Menu bar">
        <MenuItem $w={37} aria-label="Apple menu"><AppleMark /></MenuItem>
        <MenuItem $w={140} $bold>Silhouette Studio</MenuItem>
        <MenuItem $w={43}>File</MenuItem>
        <MenuItem $w={43}>Edit</MenuItem>
        <MenuItem $w={64}>Object</MenuItem>
        <MenuItem $w={50}>View</MenuItem>
        <MenuItem $w={48}>Help</MenuItem>
        <Spacer />
        <MenuItem $w={24} aria-label="Adobe"><AdobeMark /></MenuItem>
        <MenuItem $w={30} aria-label="Dropbox"><DropboxMark /></MenuItem>
        <MenuItem $w={95}>1.16 GB Free</MenuItem>
        <MenuItem $w={32} aria-label="Caffeine"><CupMark /></MenuItem>
        <MenuItem $w={30} aria-label="Displays"><DisplayMark /></MenuItem>
        <MenuItem $w={29} aria-label="Time Machine"><ClockMark /></MenuItem>
        <MenuItem $w={32} aria-label="Wi-Fi"><WifiMark /></MenuItem>
        <MenuItem $w={28} aria-label="Volume"><VolumeMark /></MenuItem>
        <MenuItem $w={32} aria-label="Battery"><BatteryMark /></MenuItem>
        <MenuItem $w={36} $small>(44%)</MenuItem>
        <MenuItem $w={102}>Fri 11:10 PM</MenuItem>
        <MenuItem $w={154} $bold $dim>Alexandra Williams</MenuItem>
        <MenuItem $w={40} aria-label="Search"><SearchMark /></MenuItem>
      </MenuBar>
      <TitleBar>
        <WindowButtons>
          <WindowButton $color="#e0454b" $edge="#8e2a2c" aria-label="Close" />
          <WindowButton $color="#f0a540" $edge="#95602a" aria-label="Minimize" />
          <WindowButton $color="#83c162" $edge="#4a7a38" aria-label="Zoom" />
        </WindowButtons>
        <WindowTitle>Silhouette Studio Designer Edition: Untitled.studio</WindowTitle>
      </TitleBar>
      <Body>
        <Toolbar role="toolbar" aria-label="Main tools">
          <Tools names={["New", "Open", "Save", "Save to SD card"]} />
          <Tools names={["Print", "Send to Silhouette"]} />
          <Tools names={["Copy", "Paste", "Cut"]} />
          <Tools names={["Undo", "Redo"]} />
          <Tools $gapBefore={2} names={["Zoom In", "Zoom Out", "Zoom Selection", "Drag Zoom", "Fit to Page"]} />
          <Spacer />
          <Tools names={["Fill Color", "Fill Gradient", "Fill Pattern", "Sketch", "Rhinestones"]} />
          <Tools names={["Line Color", "Line Style", "Cut Style"]} />
          <Tools names={["Text Style"]} />
          <Tools names={["Move", "Rotate", "Scale", "Shear", "Align", "Replicate"]} />
          <Tools names={["Modify", "Offset", "Trace"]} active="Modify" />
          <Tools names={["Page Settings", "Pencil", "Full Screen", "Grid"]} />
        </Toolbar>
        <Main>
          <SideTools role="toolbar" aria-label="Drawing tools">
            <Tools $column names={["Select", "Edit Points"]} active="Select" />
            <Tools $column names={["Draw a Line", "Draw a Rectangle", "Draw a Rounded Rectangle", "Draw an Ellipse"]} />
            <Tools $column names={["Draw a Polygon", "Draw a Curve Shape", "Draw Freehand"]} />
            <Tools $column names={["Text"]} />
            <Tools $column names={["Eraser", "Knife"]} />
            <Tools $column names={["Eyedropper"]} />
            <Tools $column $gapBefore={18} names={["Drawing View", "Library View", "Online Store"]} active="Drawing View" />
            <Tools $column $gapBefore={18} names={["Single Window", "Split Window"]} />
          </SideTools>
          <Workspace aria-label="Drawing area">
            <Canvas>
              <TopRuler />
              <SideRuler />
              <Artwork />
              <Position>16.715 , 0.340</Position>
              <Tab>
                <TabShape viewBox="0 0 138 25" aria-hidden="true">
                  <path d="M118 4Q126 3 128 8L137 25H120Z" fill="#a89797" />
                  <path d="M0.5 25L12 3Q13 0.5 16 0.5H117Q120 0.5 122 4L133 25" fill="#f4f5ef" stroke="#4e4e4a" />
                </TabShape>
                <TabLabel>Untitled.studio</TabLabel>
                <TabClose aria-label="Close Untitled.studio">
                  <G view="0 0 42 42"><path d="M11 11L31 31M31 11L11 31" strokeWidth="5" /></G>
                </TabClose>
              </Tab>
            </Canvas>
            <ScrollTrack $vertical><ScrollThumb $vertical /></ScrollTrack>
            <ScrollTrack><ScrollThumb /></ScrollTrack>
          </Workspace>
          <Panel aria-label="Modify">
            <PanelHeader>
              <PanelTitle>Modify</PanelTitle>
              <CloseButton aria-label="Close panel">
                <G view="0 0 42 42"><path d="M3 3L39 39M39 3L3 39" strokeWidth="5" /></G>
              </CloseButton>
            </PanelHeader>
            <ActionList>
              {["Weld", "Intersect", "Subtract", "Crop", "Subtract All", "Divide"].map((name) => (
                <ActionButton key={name} name={name} />
              ))}
            </ActionList>
            <ActionList>
              <ActionButton name="Detach Lines" />
            </ActionList>
            <SubHeading>Compound Paths</SubHeading>
            <ActionList>
              <ActionButton name="Make" />
              <ActionButton name="Release" />
            </ActionList>
            <Tooltip role="tooltip">
              Select three or more shapes and remove all areas which are not shared by at least two shapes
            </Tooltip>
          </Panel>
        </Main>
        <BottomBar>
          <Tools names={["Group", "Ungroup"]} />
          <Tools names={["Make Group", "Release Group"]} />
          <Tools names={["3D Object", "Delete"]} />
          <Tools names={["Bring Forward", "Send Backward"]} />
          <Tools names={["Weld Shapes", "Offset Path"]} />
          <Spacer />
          <ColorWheel aria-label="Choose theme color" />
        </BottomBar>
        <Grip viewBox="0 0 15 15" aria-hidden="true">
          <path d="M4 14L14 4M8 14L14 8M12 14L14 12" stroke="#555" />
        </Grip>
      </Body>
    </Screen>
  );
}
